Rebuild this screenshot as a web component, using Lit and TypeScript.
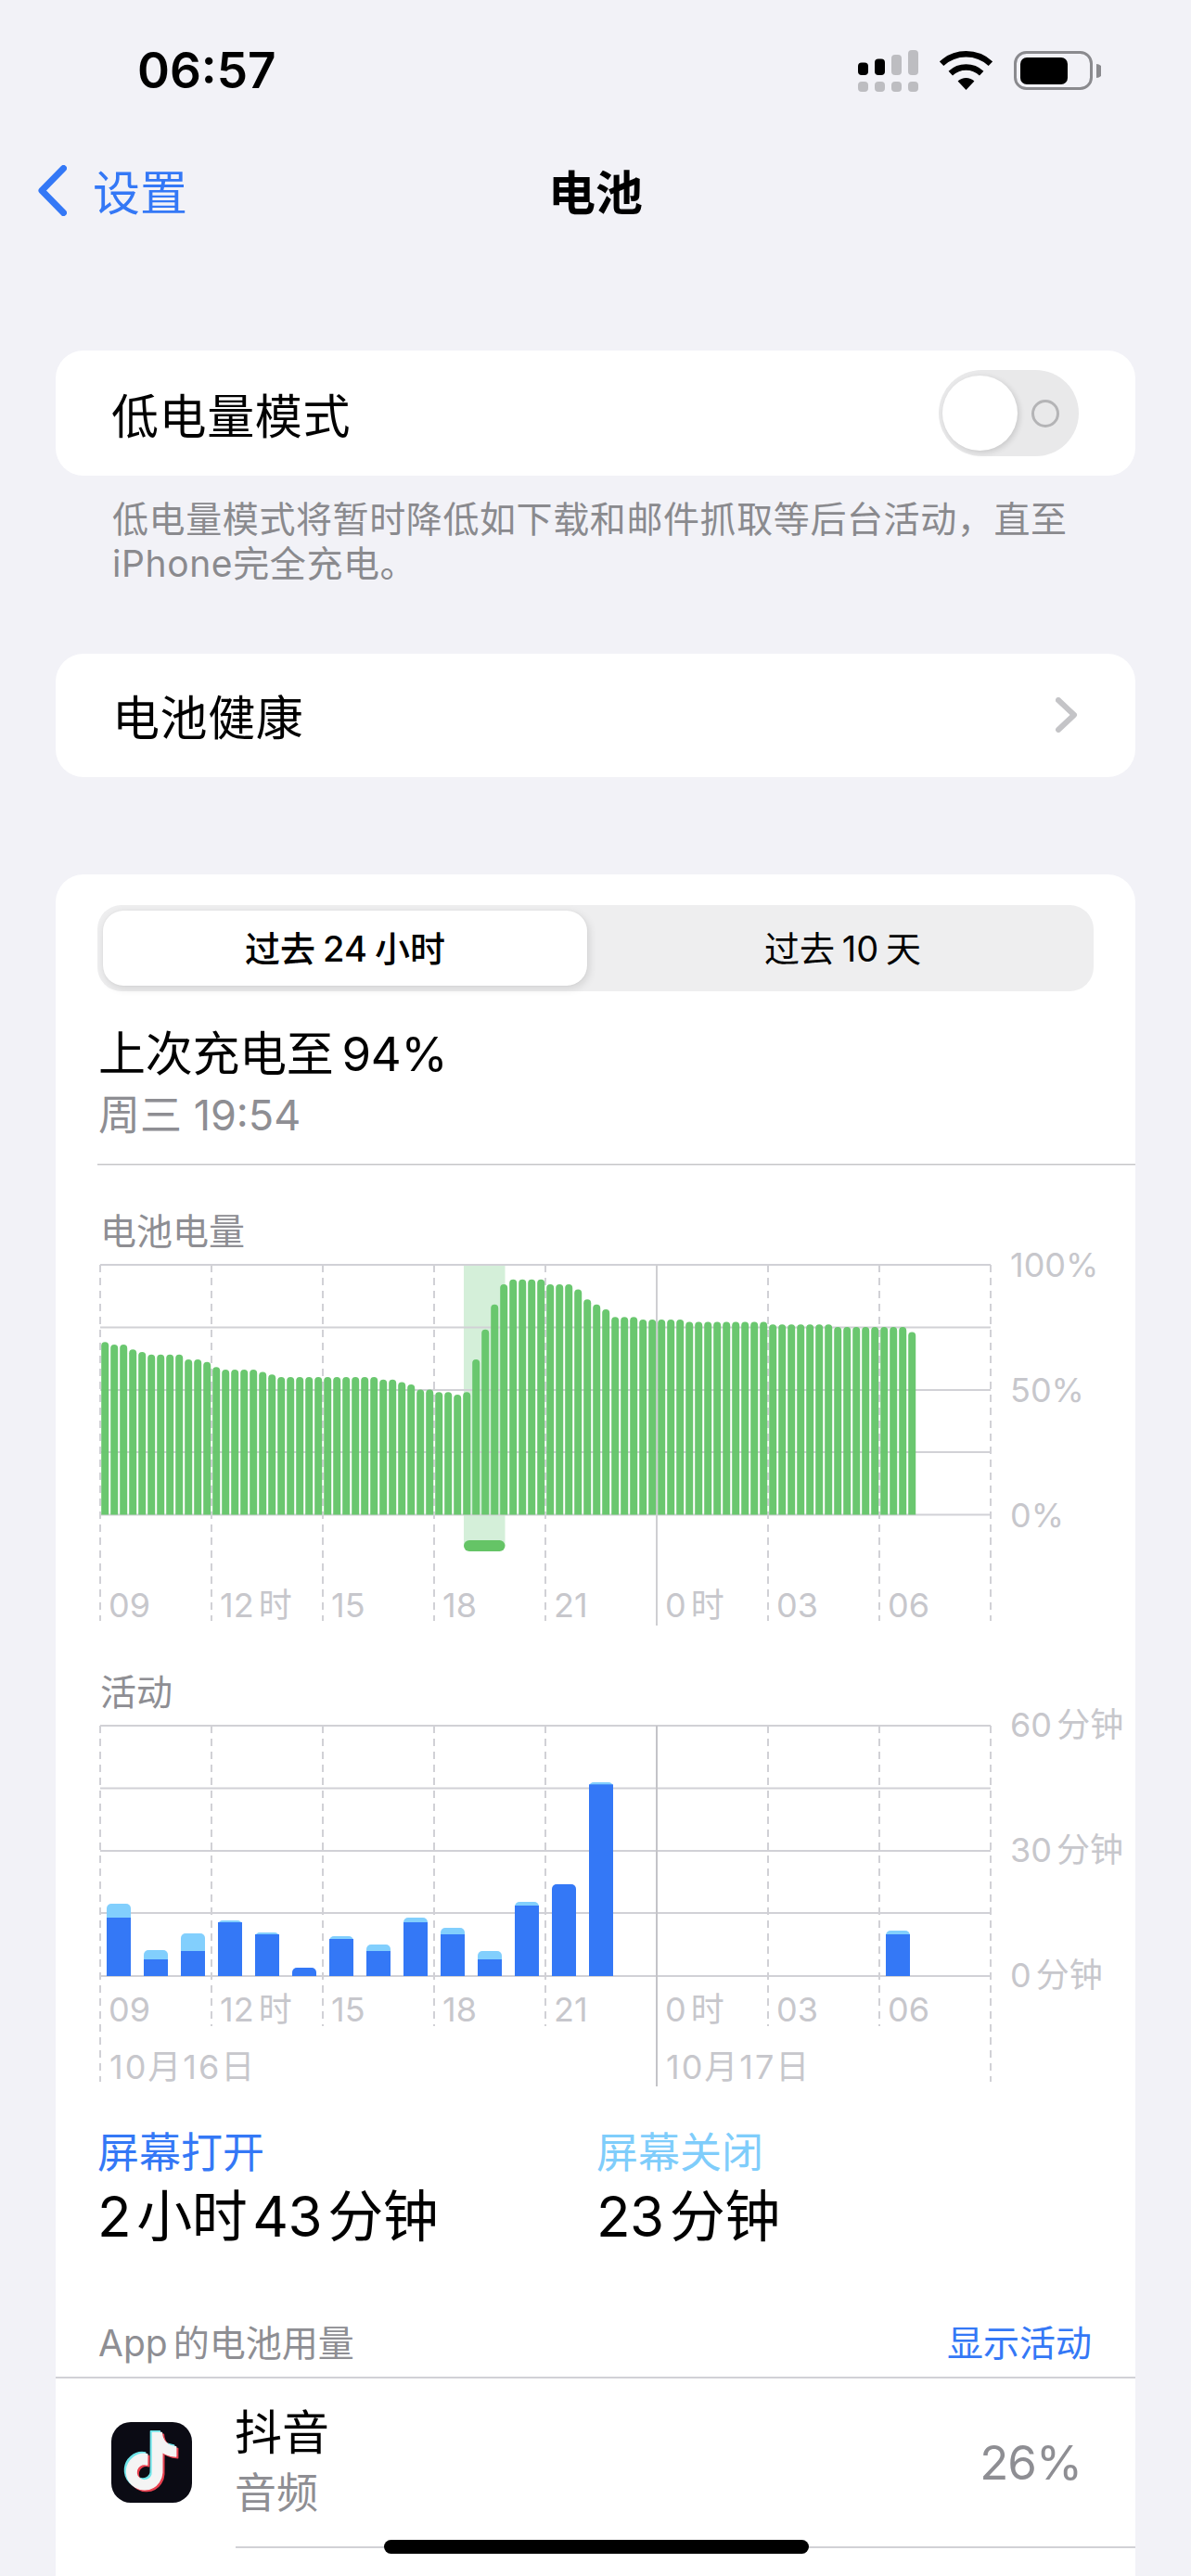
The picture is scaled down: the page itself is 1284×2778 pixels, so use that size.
import { LitElement, html, css, svg } from "lit";
import { customElement } from "lit/decorators.js";

const LEVELS = [
  69,68,68,66,65,64,64,64,64,62,62,61,59,58,58,58,58,57,56,55,55,55,55,55,55,55,55,55,55,55,
  54,54,53,52,50,50,49,49,48,49,62,74,84,92,94,94,94,94,92,92,92,90,86,84,82,79,79,79,78,78,78,78,78,
  77,77,77,77,77,77,77,77,77,76,76,76,76,76,76,76,75,75,75,75,75,75,75,75,73,
];
// index, light top, dark top (page y)
const ACTIVITY: [number, number, number][] = [
  [0,819,864],[1,969,999],[2,915,972],[3,873,879],[4,912,918],[5,1026,1026],[6,924,933],[7,951,972],
  [8,864,879],[9,897,918],[10,972,999],[11,813,825],[12,756,756],[13,426,433],[21,906,918],
];
const GRID_X = [108,228,348,468,588,708,828,948,1068];
const HOURS: [number,string][] = [[117,"09"],[237,"12 时"],[357,"15"],[477,"18"],[597,"21"],[717,"0 时"],[837,"03"],[957,"06"]];

function roundTop(x:number,w:number,top:number,base:number,r:number){
  return `M${x} ${base}V${top+r}A${r} ${r} 0 0 1 ${x+r} ${top}H${x+w-r}A${r} ${r} 0 0 1 ${x+w} ${top+r}V${base}Z`;
}

@customElement("app-root")
export class AppRoot extends LitElement {
  static styles = css`
    :host{display:block;width:1284px;height:2778px;background:#f2f2f7;overflow:hidden;position:relative;
      font-family:"Inter","Noto Sans CJK SC",sans-serif;color:#000;display:flex;flex-direction:column}
    .status{height:130px;flex:none;display:flex;align-items:flex-start;justify-content:space-between;padding:46px 97px 0 148px;box-sizing:border-box}
    .time{font-size:53px;font-weight:600;line-height:60px}
    .icons{display:flex;align-items:center;gap:23px;height:60px}
    .icons svg{display:block}
    .nav{height:154px;flex:none;display:grid;grid-template-columns:1fr auto 1fr;align-items:center;padding-left:41px;padding-bottom:4px;box-sizing:border-box}
    .back{display:flex;align-items:center;gap:28px;color:#3478f6;font-size:51px}
    .navtitle{font-size:51px;font-weight:600;margin-left:-41px}
    .card{background:#fff;border-radius:30px;margin:0 60px;flex:none}
    .low{margin-top:94px;height:135px;display:flex;align-items:center;justify-content:space-between;padding:0 61px 0 60px}
    .label{font-size:51px;letter-spacing:.6px}
    .toggle{width:151px;height:93px;border-radius:47px;background:#e9e9ea;display:flex;align-items:center;padding-left:4px;box-sizing:border-box}
    .knob{width:81px;height:81px;border-radius:50%;background:#fff;box-shadow:2px 2px 6px rgba(0,0,0,.14)}
    .ring{width:30px;height:30px;border-radius:50%;border:3px solid #b4b4b6;box-sizing:border-box;margin-left:15px}
    .foot{margin:23px 61px 0 121px;font-size:39px;line-height:48px;color:#8a8a8e;letter-spacing:.6px;white-space:nowrap;flex:none}
    .health{margin-top:73px;height:133px;display:flex;align-items:center;justify-content:space-between;padding:0 62px 2px 61px;box-sizing:border-box}
    .big{flex:1;margin-top:105px;border-radius:30px 30px 0 0;padding-top:33px;overflow:hidden}
    .seg{margin-left:45px;width:1074px;height:93px;background:#eeeeef;border-radius:26px;display:flex;align-items:center;padding-left:6px;box-sizing:border-box;font-size:38px;word-spacing:-2px}
    .seg div{display:flex;align-items:center;justify-content:center;height:81px;padding-bottom:4px;box-sizing:border-box}
    .seg .on{width:522px;background:#fff;border-radius:22px;font-weight:500;box-shadow:2px 3px 10px rgba(0,0,0,.12),0 0 2px rgba(0,0,0,.06)}
    .seg .off{flex:1;padding-left:5px;word-spacing:-3px}
    .charged{margin:38px 0 0 46px;font-size:51px;line-height:60px;word-spacing:-5px;letter-spacing:-.3px}
    .when{margin:8px 0 0 46px;font-size:45px;line-height:56px;color:#8e8e93}
    .rule{height:1px;background:#c6c6c8;margin:24px 0 0 45px;border-bottom:1px solid #e4e4e6}
    .chartname{font-size:39px;line-height:48px;color:#8e8e93;margin-left:48px}
    .chart{display:block;overflow:visible}
    .axis{fill:#c7c7cc;font-size:36px;font-family:"Inter","Noto Sans CJK SC",sans-serif;word-spacing:-5px}
    .date{letter-spacing:2px}
    .stats{display:grid;grid-template-columns:538px 1fr;padding-left:45px;margin-top:24px}
    .statname{font-size:45px;line-height:56px}
    .blue{color:#3478f6}
    .sky{color:#7fcdfb}
    .statval{font-size:60px;line-height:72px;margin-top:4px;word-spacing:-10px;letter-spacing:-.6px}
    .usage{display:flex;justify-content:space-between;margin-top:77px;padding:0 47px 12px 46px;font-size:39px;line-height:48px;border-bottom:2px solid #d1d1d6;color:#8e8e93;word-spacing:-5px}
    .usage .blue{color:#3478f6}
    .row{height:181px;display:flex;align-items:center;padding:0 58px 0 60px;box-sizing:border-box}
    .row svg{display:block;flex:none}
    .names{margin-left:46px;flex:1}
    .name{font-size:51px;line-height:62px}
    .sub{font-size:45px;line-height:58px;color:#8e8e93;margin-top:5px}
    .pct{font-size:51px;color:#8e8e93;letter-spacing:-1px}
    .sep{height:2px;background:#d1d1d6;margin-left:194px}
    .home{position:absolute;left:414px;top:2739px;width:458px;height:15px;border-radius:8px;background:#000}
  `;

  gridLines(ys:number[]){
    return ys.map(y=>svg`<line x1="108" x2="1068" y1=${y} y2=${y} stroke="#d1d1d6" stroke-width="2"/>`);
  }
  dashed(x:number,y1:number,y2:number){
    return svg`<line x1=${x} x2=${x} y1=${y1} y2=${y2} stroke="#d1d1d6" stroke-width="2" stroke-dasharray="8 6"/>`;
  }

  battery(){
    const base=1633.5;
    return html`<svg class="chart" width="1164" height="440" viewBox="60 1352 1164 440">
      <path d="M500 1364H544.5V1667H500Z" fill="#d4efd9"/>
      ${this.gridLines([1364,1431.5,1499,1566,1633.5])}
      ${GRID_X.map(x=> x===708
        ? svg`<line x1="708" x2="708" y1="1364" y2="1753" stroke="#cfcfd2" stroke-width="2"/>`
        : this.dashed(x,1364,1748))}
      ${LEVELS.map((p,k)=>svg`<path fill="#65c56a" fill-opacity=".97" d=${roundTop(109.2+10*k,8,base-2.7*p,base,4)}/>`)}
      <rect x="500" y="1661" width="44.5" height="12" rx="6" fill="#65c466"/>
      ${HOURS.map(([x,t])=>svg`<text class="axis" x=${x} y="1744">${t}</text>`)}
      <text class="axis" x="1089" y="1377">100%</text>
      <text class="axis" x="1089" y="1512">50%</text>
      <text class="axis" x="1089" y="1647">0%</text>
    </svg>`;
  }

  activity(){
    const base=2131;
    const ty=(v:number)=>1780+v/3;
    return html`<svg class="chart" width="1164" height="421" viewBox="60 1849 1164 421">
      ${this.gridLines([1861,1928.5,1996,2063,2131])}
      ${GRID_X.map(x=> x===708
        ? svg`<line x1="708" x2="708" y1="1861" y2="2250" stroke="#c4c4c8" stroke-width="2"/>`
        : this.dashed(x,1861,x===108||x===1068?2245:2185))}
      ${ACTIVITY.map(([k,l,d])=>{
        const x=115+40*k;
        return l===d
          ? svg`<path fill="#3478f6" d=${roundTop(x,26,ty(d),base,5)}/>`
          : svg`<path fill="#82cffd" d=${roundTop(x,26,ty(l),base,5)}/><rect x=${x} y=${ty(d)} width="26" height=${base-ty(d)} fill="#3478f6"/>`;
      })}
      ${HOURS.map(([x,t])=>svg`<text class="axis" x=${x} y="2180">${t}</text>`)}
      <text class="axis date" x="118" y="2242">10月16日</text>
      <text class="axis date" x="718" y="2242">10月17日</text>
      <text class="axis" x="1089" y="1873">60 分钟</text>
      <text class="axis" x="1089" y="2008">30 分钟</text>
      <text class="axis" x="1089" y="2143">0 分钟</text>
    </svg>`;
  }

  render(){
    const note="M12.525.02c1.31-.02 2.61-.01 3.91-.02.08 1.53.63 3.09 1.75 4.17 1.12 1.11 2.7 1.62 4.24 1.79v4.03c-1.44-.05-2.89-.35-4.2-.97-.57-.26-1.1-.59-1.62-.93-.01 2.92.01 5.84-.02 8.75-.08 1.4-.54 2.79-1.35 3.94-1.31 1.92-3.58 3.17-5.91 3.21-1.43.08-2.86-.31-4.08-1.03-2.02-1.19-3.44-3.37-3.65-5.71-.02-.5-.03-1-.01-1.49.18-1.9 1.12-3.72 2.58-4.96 1.66-1.44 3.98-2.13 6.15-1.72.02 1.48-.04 2.96-.04 4.44-.99-.32-2.15-.23-3.02.37-.63.41-1.11 1.04-1.36 1.75-.21.51-.15 1.07-.14 1.61.24 1.64 1.82 3.02 3.5 2.87 1.12-.01 2.19-.66 2.77-1.61.19-.33.4-.67.41-1.06.1-1.79.06-3.57.07-5.36.01-4.03-.01-8.05.02-12.07z";
    return html`
      <div class="status">
        <div class="time">06:57</div>
        <div class="icons">
          <svg width="65" height="45" viewBox="0 0 65 45">
            <rect x="0" y="13.5" width="11" height="13.5" rx="4" fill="#000"/>
            <rect x="18" y="9.5" width="11" height="17.5" rx="4" fill="#000"/>
            <rect x="36" y="5" width="11" height="22" rx="4" fill="#bdbdc1"/>
            <rect x="54" y="0" width="11" height="27" rx="4" fill="#bdbdc1"/>
            ${[0,18,36,54].map(x=>svg`<rect x=${x} y="34" width="11" height="11" rx="4" fill="#bdbdc1"/>`)}
          </svg>
          <svg width="57" height="42" viewBox="0 0 57 42">
            <path d="M2.1 13.7A38.75 38.75 0 0 1 54.9 13.7" fill="none" stroke="#000" stroke-width="6.5"/>
            <path d="M11.8 24.1A24.5 24.5 0 0 1 45.2 24.1" fill="none" stroke="#000" stroke-width="6.5"/>
            <path d="M28.5 42L19.6 32.5A13 13 0 0 1 37.4 32.5Z" fill="#000"/>
          </svg>
          <svg width="94" height="42" viewBox="0 0 94 42">
            <rect x="1.5" y="1.5" width="82" height="39" rx="12" fill="none" stroke="#8a8a8e" stroke-width="3"/>
            <rect x="7" y="7" width="51" height="29" rx="7" fill="#000"/>
            <path d="M89 14a7.5 7.5 0 0 1 0 15z" fill="#8a8a8e"/>
          </svg>
        </div>
      </div>
      <div class="nav">
        <div class="back">
          <svg width="31" height="55" viewBox="0 0 31 55"><path d="M27.5 3.5L4 27.5L27.5 51.5" fill="none" stroke="#3478f6" stroke-width="7" stroke-linecap="round" stroke-linejoin="round"/></svg>
          <span>设置</span>
        </div>
        <div class="navtitle">电池</div>
        <div></div>
      </div>
      <div class="card low">
        <div class="label">低电量模式</div>
        <div class="toggle"><div class="knob"></div><div class="ring"></div></div>
      </div>
      <div class="foot">低电量模式将暂时降低如下载和邮件抓取等后台活动，直至<br>iPhone完全充电。</div>
      <div class="card health">
        <div class="label">电池健康</div>
        <svg width="24" height="38" viewBox="0 0 24 38"><path d="M3 3L20 19L3 35" fill="none" stroke="#c4c4c7" stroke-width="6" stroke-linecap="round" stroke-linejoin="round"/></svg>
      </div>
      <div class="card big">
        <div class="seg"><div class="on">过去 24 小时</div><div class="off">过去 10 天</div></div>
        <div class="charged">上次充电至 94%</div>
        <div class="when">周三 19:54</div>
        <div class="rule"></div>
        <div class="chartname" style="margin-top:47px">电池电量</div>
        ${this.battery()}
        <div class="chartname" style="margin-top:9px">活动</div>
        ${this.activity()}
        <div class="stats">
          <div><div class="statname blue">屏幕打开</div><div class="statval">2 小时 43 分钟</div></div>
          <div><div class="statname sky">屏幕关闭</div><div class="statval">23 分钟</div></div>
        </div>
        <div class="usage"><span>App 的电池用量</span><span class="blue">显示活动</span></div>
        <div class="row">
          <svg width="87" height="87" viewBox="0 0 87 87">
            <rect width="87" height="87" rx="21" fill="#0b0b14"/>
            <g transform="translate(12.5 11.5) scale(2.55)" stroke-width=".55" stroke-linejoin="round">
              <path d=${note} fill="#6fe5ea" stroke="#6fe5ea" transform="translate(-.8 -.7)"/>
              <path d=${note} fill="#e8404f" stroke="#e8404f" transform="translate(.8 .7)"/>
              <path d=${note} fill="#f4f4f4" stroke="#f4f4f4"/>
            </g>
          </svg>
          <div class="names"><div class="name">抖音</div><div class="sub">音频</div></div>
          <div class="pct">26%</div>
        </div>
        <div class="sep"></div>
      </div>
      <div class="home"></div>
    `;
  }
}
